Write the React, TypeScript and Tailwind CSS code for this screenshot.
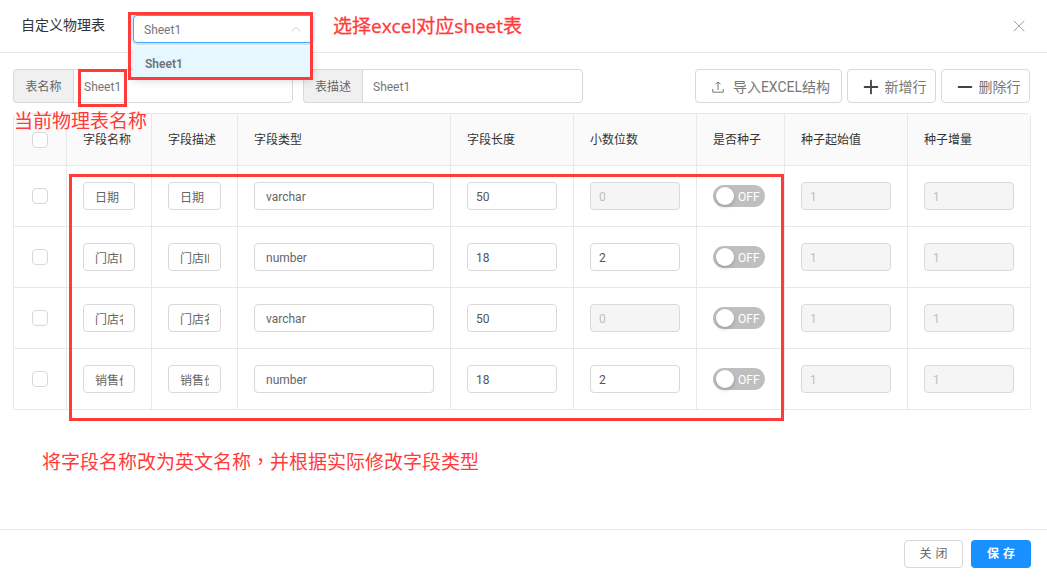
import { ChevronUp, X, Plus, Minus } from "lucide-react";

const font = "font-['Roboto','Noto_Sans_CJK_SC',sans-serif]";
const noteFont = "font-['Open_Sans','Noto_Sans_CJK_SC',sans-serif]";

const heads = ["字段名称", "字段描述", "字段类型", "字段长度", "小数位数", "是否种子", "种子起始值", "种子增量"];
const rows = [
  { name: "日期", type: "varchar", len: "50", dec: "0", decOff: true },
  { name: "门店ID", type: "number", len: "18", dec: "2", decOff: false },
  { name: "门店名称", type: "varchar", len: "50", dec: "0", decOff: true },
  { name: "销售价格", type: "number", len: "18", dec: "2", decOff: false },
];

function Field({ value, disabled, pad = "px-[11px]", dark }: { value: string; disabled?: boolean; pad?: string; dark?: boolean }) {
  return (
    <input
      readOnly
      value={value}
      className={`w-full h-7 pt-px rounded border border-[#d9d9d9] text-xs outline-none ${pad} ${font} ${
        disabled ? "bg-[#f5f5f5] text-[#bfbfbf]" : dark ? "bg-white text-[#555]" : "bg-white text-[#666]"
      }`}
    />
  );
}

function Check() {
  return <span className="block w-4 h-4 rounded-sm border border-[#d9d9d9] bg-white" />;
}

function Toggle() {
  return (
    <div className="w-[52px] h-[22px] rounded-full bg-[#bfbfbf] flex items-center pl-[3px] gap-[4px]">
      <span className="w-[18px] h-[18px] rounded-full bg-white shadow-[0_2px_4px_rgba(0,35,11,0.2)]" />
      <span className="text-xs text-white leading-none pt-px">OFF</span>
    </div>
  );
}

const grid = "grid grid-cols-[53px_85px_86px_213px_123px_123px_88px_123px_123px]";
const cell = "border-r border-[#e8e8e8] last:border-r-0 last:pr-[17px] flex items-center pl-[16px] pr-[16px]";

export default function App() {
  return (
    <div className={`relative w-[1047px] h-[578px] bg-white flex flex-col overflow-hidden ${font}`}>
      {/* header */}
      <header className="h-[53px] shrink-0 border-b border-[#e8e8e8] flex items-start pl-[21px] pr-[18px]">
        <h1 className="text-sm leading-[50px] font-normal text-[#333] w-[112px]">自定义物理表</h1>
        <div className="relative mt-[15px] w-[180px]">
          <div className="h-7 rounded border border-[#40a9ff] shadow-[0_0_0_2px_rgba(24,144,255,0.2)] bg-white flex items-center justify-between pl-[10px] pr-[8px] text-xs text-[#777]">
            <span className="pt-px">Sheet1</span>
            <ChevronUp size={16} strokeWidth={1.1} className="text-[#bfbfbf]" />
          </div>
          <div className="absolute left-0 top-[32px] w-full rounded bg-white shadow-[0_2px_8px_rgba(0,0,0,0.15)] z-10">
            <div className="h-8 pt-px bg-[#e6f7ff] flex items-center pl-3 text-xs font-semibold text-[#6f7275]">Sheet1</div>
          </div>
        </div>
        <button className="ml-auto mt-4 text-[#999]">
          <X size={20} strokeWidth={1.1} />
        </button>
      </header>

      {/* body */}
      <main className="flex-1 pl-[13px] pr-[17px] pt-4">
        <div className="flex items-start h-[34px]">
          <div className="flex w-[280px] h-[34px]">
            <span className="w-[60px] pt-[2px] shrink-0 bg-[#f0f0f0] border border-[#d9d9d9] border-r-0 rounded-l flex items-center justify-center text-xs text-[#666]">表名称</span>
            <input readOnly value="Sheet1" className="flex-1 pt-[2px] min-w-0 border border-[#d9d9d9] rounded-r px-[10px] text-xs text-[#777] outline-none" />
          </div>
          <div className="flex w-[280px] h-[34px] ml-[10px]">
            <span className="w-[59px] pt-[2px] shrink-0 bg-[#f0f0f0] border border-[#d9d9d9] border-r-0 rounded-l flex items-center justify-center text-xs text-[#666]">表描述</span>
            <input readOnly value="Sheet1" className="flex-1 pt-[2px] min-w-0 border border-[#d9d9d9] rounded-r px-[10px] text-xs text-[#777] outline-none" />
          </div>
          <div className="ml-auto flex gap-[5px]">
            <button className="w-[147px] h-[34px] pt-px pl-[5px] rounded border border-[#d9d9d9] bg-white flex items-center justify-center gap-[9px] text-sm text-[#777]">
              <svg width="12" height="12" viewBox="0 0 12 12" fill="none" stroke="#777" strokeWidth="1">
                <path d="M6 9V1M3.5 3.2 6 1l2.5 2.2M.8 8v3.2h10.4V8" />
              </svg>
              <span>导入EXCEL结构</span>
            </button>
            <button className="w-[89px] h-[34px] pt-px pl-[3px] rounded border border-[#d9d9d9] bg-white flex items-center justify-center gap-[3px] text-sm text-[#777]">
              <Plus size={22} strokeWidth={2} className="text-[#444]" />
              <span>新增行</span>
            </button>
            <button className="w-[89px] h-[34px] pt-px pl-[3px] rounded border border-[#d9d9d9] bg-white flex items-center justify-center gap-[3px] text-sm text-[#777]">
              <Minus size={22} strokeWidth={2} className="text-[#444]" />
              <span>删除行</span>
            </button>
          </div>
        </div>

        <div className="mt-[10px] w-[1018px] border border-[#e8e8e8] rounded-t text-xs">
          <div className={`${grid} h-[52px] bg-[#fafafa] border-b border-[#e8e8e8] text-[#333]`}>
            <div className={`${cell} justify-center !pl-0 !pr-0`}><Check /></div>
            {heads.map((h) => (
              <div key={h} className={cell}>{h}</div>
            ))}
          </div>
          {rows.map((r, i) => (
            <div key={i} className={`${grid} ${i < 3 ? "h-[61px] border-b border-[#e8e8e8]" : "h-[60px]"}`}>
              <div className={`${cell} justify-center !pl-0 !pr-0`}><Check /></div>
              <div className={cell}><Field value={r.name} /></div>
              <div className={cell}><Field value={r.name} /></div>
              <div className={cell}><Field value={r.type} /></div>
              <div className={cell}><Field value={r.len} dark pad="px-2" /></div>
              <div className={cell}>
                <Field value={r.dec} disabled={r.decOff} dark pad="px-2" />
              </div>
              <div className={cell}><Toggle /></div>
              <div className={cell}><Field value="1" disabled pad="px-2" /></div>
              <div className={cell}><Field value="1" disabled pad="px-2" /></div>
            </div>
          ))}
        </div>
      </main>

      {/* footer */}
      <footer className="h-[49px] shrink-0 border-t border-[#e8e8e8] flex items-start justify-end gap-2 pr-4 pt-[10px]">
        <button className="w-[59px] h-7 rounded border border-[#d9d9d9] bg-white text-xs text-[#666] tracking-[0.34em] pl-[4px]">关闭</button>
        <button className="w-[60px] h-7 rounded bg-[#1890ff] text-xs font-semibold text-white tracking-[0.34em] pl-[4px]">保存</button>
      </footer>

      {/* annotations */}
      <div className="absolute left-[128px] top-[12px] w-[185px] h-[68px] border-[3px] border-[#ff3b3b] z-20" />
      <div className="absolute left-[78px] top-[69px] w-[49px] h-[38px] border-[3px] border-[#ff3b3b] z-20" />
      <div className="absolute left-[69px] top-[174px] w-[715px] h-[247px] border-[3px] border-[#ff3b3b] z-20" />
      <div className={`absolute left-[333px] top-[12px] text-[19px] leading-[28px] text-[#ff3b3b] z-20 whitespace-nowrap [-webkit-text-stroke:0.3px_#ff3b3b] ${noteFont}`}>选择excel对应sheet表</div>
      <div className={`absolute left-[14px] top-[110px] text-[19px] leading-[22px] text-[#ff3b3b] z-20 whitespace-nowrap ${noteFont}`}>当前物理表名称</div>
      <div className={`absolute left-[42px] top-[447px] text-[19px] leading-[28px] text-[#ff3b3b] z-20 whitespace-nowrap ${noteFont}`}>
        将字段名称改为英文名称<span className="font-['Noto_Sans_CJK_TC',sans-serif]">，</span>并根据实际修改字段类型
      </div>
    </div>
  );
}
